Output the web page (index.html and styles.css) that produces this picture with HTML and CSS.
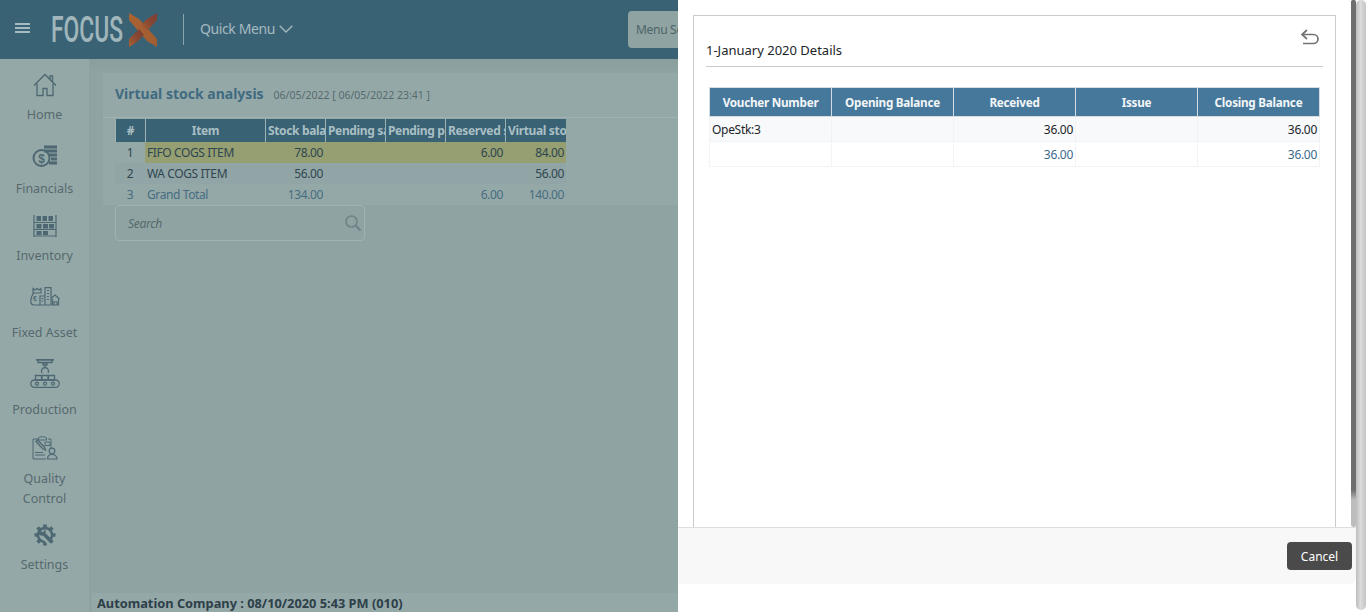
FILE: index.html
```html
<!DOCTYPE html>
<html lang="en">
<head>
<meta charset="utf-8">
<title>Virtual stock analysis</title>
<link rel="stylesheet" href="styles.css">
</head>
<body>
<div class="app">
  <header class="topbar">
    <div class="burger"><span></span><span></span><span></span></div>
    <svg class="logo" viewBox="0 0 108 36" width="108" height="36">
      <defs>
        <linearGradient id="xa" x1="0" y1="0" x2="1" y2="1"><stop offset="0" stop-color="#ac6331"/><stop offset="1" stop-color="#a05c32"/></linearGradient>
        <linearGradient id="xb" x1="0" y1="1" x2="1" y2="0"><stop offset="0" stop-color="#a96232"/><stop offset=".55" stop-color="#854633"/><stop offset="1" stop-color="#7c4034"/></linearGradient>
      </defs>
      <text class="logo-text" x="0" y="30" textLength="72" lengthAdjust="spacingAndGlyphs">FOCUS</text>
      <polygon fill="url(#xa)" points="78,1 88,7 106,27 106,35 96,29 78,8"/>
      <polygon fill="url(#xb)" points="106,1 106,8 96,19 90,13 96,7"/>
      <polygon fill="url(#xb)" points="86,30 78,35 78,27 88,17 93,23"/>
    </svg>
    <div class="divider"></div>
    <div class="quick">Quick Menu
      <svg class="chev" viewBox="0 0 14 8" width="14" height="8"><path d="M.7.7 7 7 13.3.7" fill="none" stroke="currentColor" stroke-width="1.300"/></svg>
    </div>
    <div class="menu-search">Menu Search</div>
  </header>
  <div class="layout">
    <nav class="sidebar">
      <a class="nav-item nav-home">
        <svg class="nav-icon" viewBox="0 0 24 24" width="24" height="24" fill="none" stroke="#4d6872" stroke-width="1.300"><path d="M1 12.500 12 1.500l11 11"/><path d="M17 6.500V3h2.500v6"/><path d="M4 10.500V22.500h6v-7h4v7h6V10.500"/></svg>
        <span>Home</span>
      </a>
      <a class="nav-item nav-fin">
        <svg class="nav-icon" viewBox="0 0 26 23" width="26" height="23" fill="none" stroke="#4d6872"><circle cx="9.500" cy="13" r="8" stroke-width="2"/><text class="coin" x="9.500" y="17.500" text-anchor="middle">$</text><path d="M12 2h13M12 6h13M17 10h8M19 14h6M17 18h8" stroke-width="2.800"/></svg>
        <span>Financials</span>
      </a>
      <a class="nav-item nav-inv">
        <svg class="nav-icon" viewBox="0 0 24 22" width="24" height="22" fill="#4d6872" stroke="#4d6872"><path d="M1 0v22M23 0v22M1 7.500h22M1 14.500h22M1 21h22" stroke-width="1.200" fill="none"/><path stroke="none" d="M3.500 1h4.500v5H3.500zM9.500 1h4.500v5H9.500zM15.500 1H20v5h-4.500zM3.500 9h5v4.500h-5zM10 9h5v4.500h-5zM16 9h5v4.500h-5zM3.500 16h5v4h-5zM10 16h5v4h-5z"/></svg>
        <span>Inventory</span>
      </a>
      <a class="nav-item nav-asset">
        <svg class="nav-icon" viewBox="0 0 30 19" width="30" height="19" fill="none" stroke="#4d6872" stroke-width="1.200"><path d="M3 1.500 5 3l2-1.500L9 3l2-1.500V6H3z"/><path d="M3.500 6C1.500 9 .5 12 .8 15c.2 2 1.500 3 3.200 3H10"/><text class="coin-sm" x="3" y="14">€</text><path d="M10 9h5v9h-5zM15 .7h6v17.300h-6z"/><path d="M11.500 11.500h2M11.500 14h2M17 3.500h2M17 6.500h2M17 9.500h2M17 12.500h2"/><path d="M21 11.500 25 8l4.500 4M22.500 12v6h6v-6M24 18v-3h3v3"/></svg>
        <span>Fixed Asset</span>
      </a>
      <a class="nav-item nav-prod">
        <svg class="nav-icon" viewBox="0 0 30 29" width="30" height="29" fill="none" stroke="#4d6872" stroke-width="1.300"><path d="M6 .8h18" stroke-width="1.800"/><path d="M8 1v2.500h14V1M13 4h4v2h-4zM15 6v2"/><path d="M12 14c-1.500-2.500 0-5 3-5.500 3 .5 4.500 3 3 5.500" stroke-width="1.300"/><path d="M5.500 16.500h6V21h-6zM12 16.500h6V21h-6zM18.500 16.500h6V21h-6z"/><rect x=".8" y="21" width="28.400" height="7.300" rx="3.600"/><circle cx="7" cy="24.700" r="1.500"/><circle cx="15" cy="24.700" r="1.500"/><circle cx="23" cy="24.700" r="1.500"/></svg>
        <span>Production</span>
      </a>
      <a class="nav-item nav-qc">
        <svg class="nav-icon" viewBox="0 0 26 24" width="26" height="24" fill="none" stroke="#4d6872" stroke-width="1"><path d="M6 3H1v20h13"/><path d="M16 3h3v9"/><path d="M6.500 4V1.800C8 .3 13 .3 14.500 1.800V4z"/><path d="M4 5.500 11 13l2.500 1-1-2.800-7-7.200z" stroke-width="1.300"/><path d="M13 6h5v3.500h-5z"/><path d="M3 16.500h8M3 19h10"/><circle cx="20" cy="15" r="2.800" stroke-width="1.200"/><path d="M15.500 23c0-6 9-6 9.500 0z" stroke-width="1.200"/></svg>
        <span>Quality<br>Control</span>
      </a>
      <a class="nav-item nav-set">
        <svg class="nav-icon" viewBox="0 0 22 22" width="22" height="22"><path d="M11 .5v21M.5 11h21M3.600 3.600l14.800 14.800M3.600 18.400 18.400 3.600" stroke="#4d6872" stroke-width="3.600"/><circle cx="11" cy="11" r="8.300" fill="#4d6872"/><circle cx="11" cy="11" r="5.800" fill="#95a8a8"/><path d="M15.500 18.500 7.800 10.500" stroke="#95a8a8" stroke-width="5"/><path d="M8 4.800a3.800 3.800 0 0 0-3 5.500c1.200 1.500 2.800 1.700 4 1.200l6.500 7c1.800 1.500 4-.5 3-2.500l-7-6.800c.5-1.500.2-3-1-4l-1 3-2.500-.7z" fill="#4d6872"/></svg>
        <span>Settings</span>
      </a>
    </nav>
    <main class="main">
      <section class="panel">
        <div class="panel-head">
          <h1 class="panel-title">Virtual stock analysis</h1>
          <span class="panel-date">06/05/2022 [ 06/05/2022 23:41 ]</span>
        </div>
        <table class="stock">
          <thead>
            <tr><th class="c-num center">#</th><th class="c-item center">Item</th><th class="c-n">Stock balance</th><th class="c-n">Pending sales</th><th class="c-n">Pending purchase</th><th class="c-n">Reserved stock</th><th>Virtual stock</th></tr>
          </thead>
          <tbody>
            <tr class="row-hl"><td class="center idx">1</td><td class="name">FIFO COGS ITEM</td><td>78.00</td><td></td><td></td><td>6.00</td><td>84.00</td></tr>
            <tr class="row-plain"><td class="center idx">2</td><td class="name">WA COGS ITEM</td><td>56.00</td><td></td><td></td><td></td><td>56.00</td></tr>
            <tr class="row-total"><td class="center idx">3</td><td class="name">Grand Total</td><td>134.00</td><td></td><td></td><td>6.00</td><td>140.00</td></tr>
          </tbody>
        </table>
      </section>
      <div class="search">
        <span class="search-text">Search</span>
        <svg viewBox="0 0 16 16" width="16" height="16" fill="none" stroke="#6f8488"><circle cx="6.500" cy="6.500" r="5.500" stroke-width="1.700"/><path d="m10.500 10.500 5 5" stroke-width="2.400"/></svg>
      </div>
      <footer class="status">Automation Company : 08/10/2020 5:43 PM (010)</footer>
    </main>
  </div>
</div>

<aside class="drawer">
  <div class="drawer-body">
    <div class="card">
      <div class="card-head">
        <div class="card-title">1-January 2020 Details</div>
        <svg class="back" viewBox="0 0 18 16" width="18" height="16" fill="none" stroke="#737373" stroke-width="1.700"><path d="M6 1 1 5.500 6 10"/><path d="M1 5.500h11.500a4.500 4.500 0 0 1 0 9H2"/></svg>
      </div>
      <table class="details">
        <thead>
          <tr><th>Voucher Number</th><th>Opening Balance</th><th>Received</th><th>Issue</th><th>Closing Balance</th></tr>
        </thead>
        <tbody>
          <tr class="odd"><td class="text">OpeStk:3</td><td></td><td>36.00</td><td></td><td>36.00</td></tr>
          <tr class="sum"><td></td><td></td><td>36.00</td><td></td><td>36.00</td></tr>
        </tbody>
      </table>
    </div>
  </div>
  <div class="drawer-foot"><button class="cancel" type="button">Cancel</button></div>
  <div class="drawer-gap"></div>
  <div class="scroll-inner"></div>
  <div class="scroll-outer"></div>
</aside>
</body>
</html>
```
FILE: styles.css
```css
* { box-sizing: border-box; }
html, body { margin: 0; height: 612px; overflow: hidden; }
body { font-family: "Noto Sans", "Open Sans", sans-serif; font-size: 12px; color: #2f4550; background: #8fa3a3; }

.app { height: 612px; display: flex; flex-direction: column; }

/* top bar */
.topbar { height: 59px; flex: none; background: #3a6275; display: flex; align-items: center; color: #a5bbc0; overflow: hidden; }
.burger { width: 15px; margin-left: 15px; margin-bottom: 3px; display: flex; flex-direction: column; gap: 2px; }
.burger span { display: block; height: 2px; background: #a5bbc0; }
.logo { margin-left: 21px; flex: none; margin-right: -1px; }
.logo-text { font-family: "Roboto", sans-serif; font-weight: 500; font-size: 36px; fill: #a0b6ba; }
.divider { width: 1px; height: 31px; background: #8aa5ad; margin-left: 25px; flex: none; }
.quick { margin-left: 16px; margin-bottom: 3px; font-size: 14px; letter-spacing: -.4px; display: flex; align-items: center; gap: 4px; width: 428px; flex: none; }
.chev { margin-top: 1px; }
.menu-search { width: 200px; height: 37px; flex: none; background: #8fa3a3; border-radius: 4px; color: #4e6367; padding: 10px 8px; margin-top: -1px; font-size: 12px; letter-spacing: -.3px; }

.layout { flex: 1; display: flex; min-height: 0; }

/* sidebar */
.sidebar { width: 90px; flex: none; background: #95a8a8; border-right: 1px solid #8ea1a1; padding-top: 14px; display: flex; flex-direction: column; align-items: center; }
.nav-item { display: flex; flex-direction: column; align-items: center; text-align: center; font-size: 12.500px; line-height: 20px; color: #56696d; width: 100%; }
.nav-icon { display: block; flex: none; }
.nav-home { margin-bottom: 20px; }
.nav-home .nav-icon { margin-bottom: 8px; }
.nav-fin { margin-bottom: 16px; }
.nav-fin .nav-icon { margin-bottom: 11px; }
.nav-inv { margin-bottom: 21px; }
.nav-inv .nav-icon { margin-bottom: 9px; }
.nav-asset { margin-bottom: 16px; }
.nav-asset .nav-icon { margin-bottom: 17px; }
.nav-prod { margin-bottom: 16px; }
.nav-prod .nav-icon { margin-bottom: 12px; }
.nav-qc { margin-bottom: 15px; }
.nav-qc .nav-icon { margin-bottom: 9px; }
.nav-set .nav-icon { margin-bottom: 9px; }
.coin { font-family: "Liberation Sans", sans-serif; font-weight: 700; font-size: 12px; fill: #4d6872; stroke: none; }
.coin-sm { font-family: "Liberation Sans", sans-serif; font-weight: 700; font-size: 7px; fill: #4d6872; stroke: none; }

/* main */
.main { flex: 1; min-width: 0; display: flex; flex-direction: column; padding: 14px 0 0 13px; background: linear-gradient(#8a9e9e, #8fa3a3 14px); }
.panel { background: #95a8a8; padding: 0 0 0 12px; height: 132px; flex: none; }
.panel-head { height: 45px; margin-left: -12px; padding: 11px 0 0 12px; display: flex; align-items: baseline; gap: 10px; border-bottom: 1px solid #a0b2b2; }
.panel-title { margin: 0; font-size: 14px; font-weight: 700; color: #3f6b80; }
.panel-date { font-size: 10.500px; color: #566a6e; }

.stock { border-collapse: separate; border-spacing: 0; table-layout: fixed; width: 451px; margin-top: 1px; }
.stock th { background: #3a6275; color: #a9bfc4; font-size: 12px; font-weight: 700; height: 23px; padding: 0 0 0 2px; text-align: left; overflow: hidden; white-space: nowrap; border-left: 1px solid #a0b2b2; letter-spacing: -.35px; }
.stock .center { text-align: center; padding: 0; }
.c-num { width: 30px; }
.c-item { width: 120px; }
.c-n { width: 60px; }
.stock td { height: 21px; padding: 0 2px 0 0; text-align: right; font-size: 12px; letter-spacing: -.4px; white-space: nowrap; color: #2f4550; }
.stock td.name { text-align: left; padding-left: 2px; }
.stock td.idx { color: #2f4550; }
.stock .row-hl td { background: #959f72; }
.stock .row-hl td.idx { background: #95a8a8; }
.stock .row-plain td { background: #91a5a6; }
.stock .row-total td { color: #456d80; background: #95a8a8; }
.stock .row-total td.idx { color: #456d80; }

.search { width: 250px; height: 36px; margin: 0 0 0 12px; flex: none; border: 1px solid #a0b2b2; border-radius: 4px; display: flex; align-items: center; justify-content: space-between; padding: 0 3px 0 12px; background: #8fa3a3; }
.search-text { font-style: italic; font-size: 12px; letter-spacing: -.3px; color: #56696d; }

.status { margin-top: auto; margin-left: -11px; height: 19px; background: #95a8a8; font-weight: 700; font-size: 12.800px; line-height: 21px; padding-left: 5px; color: #2d3f48; }

/* drawer */
.drawer { position: fixed; top: 0; right: 0; bottom: 0; width: 688px; background: #fff; display: flex; flex-direction: column; overflow: hidden; color: #212529; }
.drawer-body { flex: 1; min-height: 0; padding: 15px 30px 0 15px; overflow: hidden; }
.card { height: 600px; border: 1px solid #cccccc; padding: 0 12px; }
.card-head { height: 51px; border-bottom: 1px solid #cccccc; display: flex; justify-content: space-between; align-items: flex-start; }
.card-title { margin-top: 25px; font-size: 13px; line-height: 18px; color: #212529; }
.back { margin-top: 13px; margin-right: 4px; }

.details { border-collapse: collapse; table-layout: fixed; width: 611px; margin: 20px 0 0 3px; }
.details th { background: #46789b; color: #f2f6f8; height: 29px; padding: 0; font-size: 11.700px; font-weight: 700; text-align: center; border: 1px solid #d6dde2; letter-spacing: -.25px; }
.details td { height: 25px; padding: 0 2px; font-size: 12px; letter-spacing: -.3px; text-align: right; border: 1px solid #f2f3f4; color: #212529; }
.details td.text { text-align: left; }
.details .odd td { background: #f8f9fb; }
.details .sum td { color: #3a6a8c; }

.drawer-foot { height: 57px; flex: none; width: 678px; background: #f8f8f8; border-top: 1px solid #dedede; border-bottom-right-radius: 6px; display: flex; align-items: center; justify-content: flex-end; padding: 0 4px 0 0; }
.cancel { width: 65px; height: 28px; border: 0; border-radius: 4px; background: #4a4a4a; color: #fff; font: 12px "Noto Sans", sans-serif; padding: 0; }
.drawer-gap { height: 28px; flex: none; }

.scroll-inner { position: absolute; top: 0; right: 10px; width: 5px; height: 527px; background: linear-gradient(#6e6e6e 490px, #bdbdbd 500px); border-radius: 2px 2px 3px 3px; }
.scroll-outer { position: absolute; top: 0; right: 0; width: 10px; height: 610px; border-radius: 5px; background: linear-gradient(90deg, #bcbcbc, #dcdcdc 45%, #c4c4c4); }
```
